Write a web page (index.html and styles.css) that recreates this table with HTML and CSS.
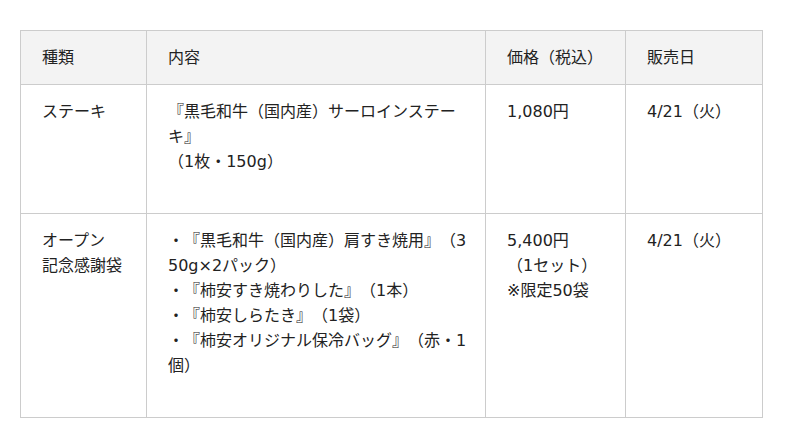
FILE: index.html
```html
<!DOCTYPE html>
<html lang="ja">
<head>
<meta charset="utf-8">
<link rel="stylesheet" href="styles.css">
</head>
<body>
<div class="wrap">
<table class="tbl">
  <colgroup>
    <col class="c1"><col class="c2"><col class="c3"><col class="c4">
  </colgroup>
  <thead>
    <tr><th>種類</th><th>内容</th><th>価格（税込）</th><th>販売日</th></tr>
  </thead>
  <tbody>
    <tr>
      <td>ステーキ</td>
      <td>『黒毛和牛（国内産）サーロインステーキ』<br>（1枚・150g）</td>
      <td>1,080円</td>
      <td>4/21（火）</td>
    </tr>
    <tr>
      <td>オープン<br>記念感謝袋</td>
      <td>・『黒毛和牛（国内産）肩すき焼用』（350g×2パック）<br>・『柿安すき焼わりした』（1本）<br>・『柿安しらたき』（1袋）<br>・『柿安オリジナル保冷バッグ』（赤・1個）</td>
      <td>5,400円<br>（1セット）<br>※限定50袋</td>
      <td>4/21（火）</td>
    </tr>
  </tbody>
</table>
</div>
</body>
</html>
```
FILE: styles.css
```css
html, body {
  margin: 0;
  padding: 0;
  background: #fff;
}
.wrap {
  padding: 30px 20px;
}
.tbl {
  border-collapse: collapse;
  table-layout: fixed;
  width: 742px;
  font-family: "DejaVu Sans", "Noto Sans CJK JP", sans-serif;
  font-size: 16px;
  line-height: 25px;
  color: #222;
  text-spacing-trim: space-all;
}
.c1 { width: 126px; }
.c2 { width: 339px; }
.c3 { width: 140px; }
.c4 { width: 137px; }
.tbl th,
.tbl td {
  border: 1px solid #cccccc;
  text-align: left;
  vertical-align: top;
  font-weight: normal;
  padding: 14px 16px 39px 21px;
  word-break: break-all;
  line-break: anywhere;
}
.tbl th {
  background: #f3f3f3;
  padding-bottom: 14px;
}
```
